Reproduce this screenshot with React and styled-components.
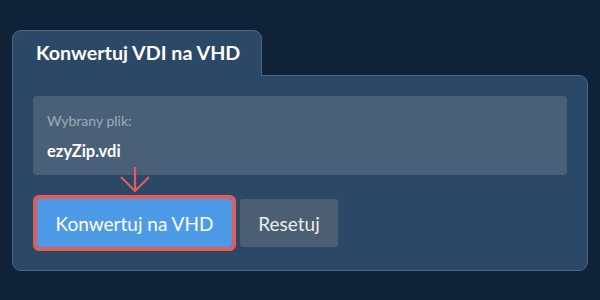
import React from "react";
import styled, { createGlobalStyle } from "styled-components";

const GlobalStyle = createGlobalStyle`
  html, body {
    margin: 0;
    padding: 0;
    background: #0f2237;
  }
  body {
    font-family: Lato, "Open Sans", sans-serif;
    width: 600px;
    height: 300px;
    overflow: hidden;
  }
`;

const Page = styled.div`
  padding: 30px 12px 0 12px;
`;

const Tab = styled.div`
  width: 250px;
  height: 46px;
  box-sizing: border-box;
  background: #2c4867;
  border: 1px solid #4b6886;
  border-bottom: none;
  border-radius: 9px 9px 0 0;
  display: flex;
  align-items: center;
  padding: 0 0 2px 23px;
  color: #ffffff;
  font-weight: 700;
  font-size: 19.7px;
  white-space: nowrap;
  position: relative;
  z-index: 1;
  margin-bottom: -1px;
`;

const Panel = styled.div`
  box-sizing: border-box;
  width: 576px;
  height: 196px;
  background: #2c4867;
  border: 1px solid #4b6886;
  border-radius: 0 9px 9px 9px;
  padding: 20px 20px 0 20px;
`;

const InfoBox = styled.div`
  height: 79px;
  box-sizing: border-box;
  background: #4a6078;
  border-radius: 4px;
  padding: 17px 14px 0 14px;
`;

const Label = styled.div`
  color: #9eabb9;
  font-size: 14px;
  line-height: 16px;
`;

const FileName = styled.div`
  margin-top: 12px;
  color: #ffffff;
  font-weight: 700;
  font-size: 16.5px;
  line-height: 20px;
`;

const Actions = styled.div`
  display: flex;
  gap: 8px;
  margin-top: 24px;
  padding-left: 4px;
`;

const Button = styled.button`
  height: 48px;
  border: none;
  border-radius: 3px;
  font-family: Lato, "Open Sans", sans-serif;
  font-size: 19px;
  white-space: nowrap;
  padding: 0;
  color: ${(p) => (p.$primary ? "#ffffff" : "#e9edf1")};
  background: ${(p) => (p.$primary ? "#4d9be6" : "#4c5e71")};
  cursor: pointer;
  position: relative;
  width: ${(p) => (p.$primary ? "195px" : "98px")};
  ${(p) =>
    p.$highlight &&
    `
    outline: 4px solid #e05d5b;
    outline-offset: 0;
    border-radius: 2px;
  `}
`;

const Arrow = styled.svg`
  position: absolute;
  left: 50%;
  top: -32px;
  transform: translateX(-50%);
  overflow: visible;
`;

export default function App() {
  return (
    <>
      <GlobalStyle />
      <Page>
        <Tab>Konwertuj VDI na VHD</Tab>
        <Panel>
          <InfoBox>
            <Label>Wybrany plik:</Label>
            <FileName>ezyZip.vdi</FileName>
          </InfoBox>
          <Actions>
            <Button $primary $highlight>
              <Arrow width="30" height="26" viewBox="0 0 30 26">
                <path
                  d="M15 0 V24 M1 10 L15 24 L29 10"
                  fill="none"
                  stroke="#e05d5b"
                  strokeWidth="2.2"
                />
              </Arrow>
              Konwertuj na VHD
            </Button>
            <Button>Resetuj</Button>
          </Actions>
        </Panel>
      </Page>
    </>
  );
}
